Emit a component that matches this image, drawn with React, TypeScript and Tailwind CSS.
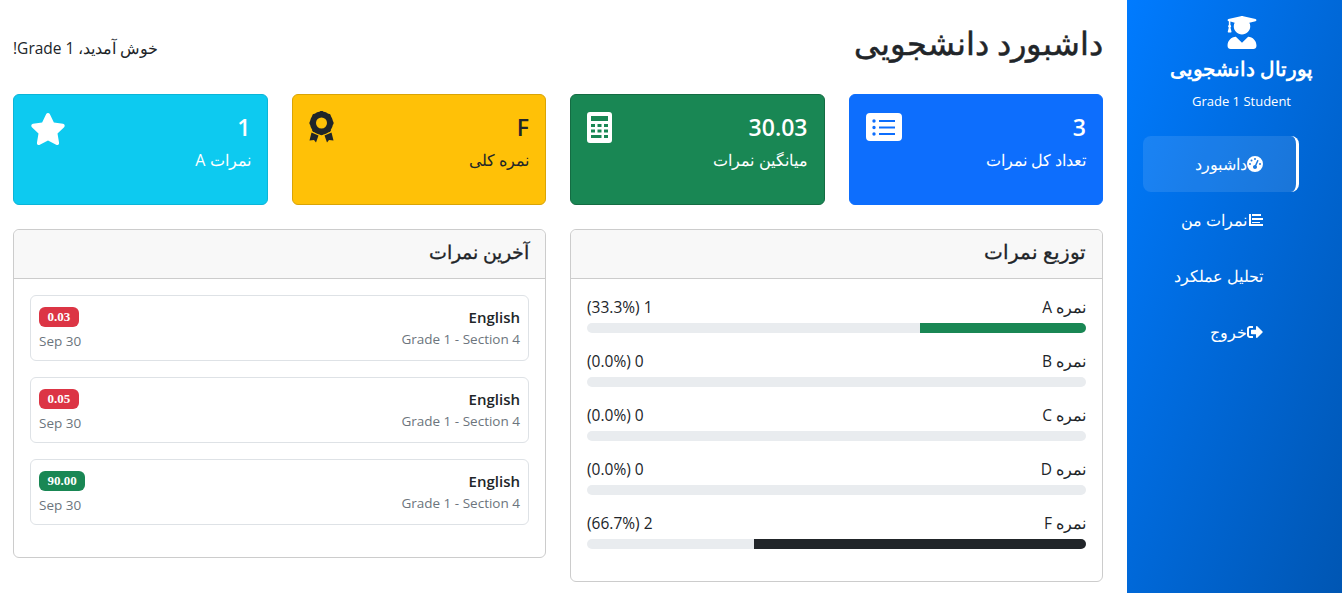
import { FaSignOutAlt, FaStar, FaUserGraduate } from "react-icons/fa";
import { FaGaugeHigh } from "react-icons/fa6";

const ListIcon = () => (
  <svg width="36" height="28" viewBox="0 0 36 28" fill="currentColor" className="mt-[2px]">
    <path
      fillRule="evenodd"
      d="M4 0h28a4 4 0 0 1 4 4v20a4 4 0 0 1-4 4H4a4 4 0 0 1-4-4V4a4 4 0 0 1 4-4zm5.700 8a1.700 1.700 0 1 0-3.400 0 1.700 1.700 0 0 0 3.400 0zm0 6.500a1.700 1.700 0 1 0-3.400 0 1.700 1.700 0 0 0 3.400 0zm0 6.500a1.700 1.700 0 1 0-3.400 0 1.700 1.700 0 0 0 3.400 0zM13 7v2h16V7zm0 6.500v2h16v-2zm0 6.500v2h16v-2z"
    />
  </svg>
);

const CalcIcon = () => (
  <svg width="25" height="31" viewBox="0 0 25 31" fill="currentColor" className="mt-[1px]">
    <path
      fillRule="evenodd"
      d="M3 0h19a3 3 0 0 1 3 3v25a3 3 0 0 1-3 3H3a3 3 0 0 1-3-3V3a3 3 0 0 1 3-3zm1 4v5h17V4zm0 8v3h4v-3zm6.500 0v3h4v-3zM17 12v3h4v-3zM4 17.500v3h4v-3zm6.500 0v3h4v-3zm6.500 0v3h4v-3zM4 23v3h10.500v-3zm13 0v3h4v-3z"
    />
  </svg>
);

const AwardIcon = () => (
  <svg width="25" height="32" viewBox="0 0 25 32" fill="currentColor">
    <circle cx="12.500" cy="12" r="8.500" fill="none" stroke="currentColor" strokeWidth="6" />
    <circle cx="12.500" cy="1.800" r="2" />
    <circle cx="19.700" cy="4.800" r="2" />
    <circle cx="22.700" cy="12" r="2" />
    <circle cx="19.700" cy="19.200" r="2" />
    <circle cx="12.500" cy="22.200" r="2" />
    <circle cx="5.300" cy="19.200" r="2" />
    <circle cx="2.300" cy="12" r="2" />
    <circle cx="5.300" cy="4.800" r="2" />
    <path d="M2.500 21.500l7 3-2.500 7-2-2.500-4.500.5zM22.500 21.500l-7 3 2.500 7 2-2.500 4.500.5z" />
  </svg>
);

const GradesIcon = () => (
  <svg width="16" height="16" viewBox="0 0 16 16" fill="currentColor">
    <path d="M2 2h2v10h12v2H2zM5 2h9v2H5zM5 6h11v2H5zM5 10h8v1H5z" />
  </svg>
);

const stats = [
  { value: "3", label: "تعداد کل نمرات", bg: "bg-[#0d6efd] border-[#0d6efd] text-white", icon: <ListIcon /> },
  { value: "30.03", label: "میانگین نمرات", bg: "bg-[#198754] border-[#146c43] text-white", icon: <CalcIcon /> },
  { value: "F", label: "نمره کلی", bg: "bg-[#ffc107] border-[#d9a406] text-[#212529]", icon: <AwardIcon /> },
  { value: "1", label: "نمرات A", bg: "bg-[#0dcaf0] border-[#0bb5d8] text-white", icon: <FaStar className="text-[36px]" /> },
];

const dist = [
  { label: "نمره A", count: "1 (33.3%)", pct: "w-[33.3%] bg-[#198754]" },
  { label: "نمره B", count: "0 (0.0%)", pct: "w-0" },
  { label: "نمره C", count: "0 (0.0%)", pct: "w-0" },
  { label: "نمره D", count: "0 (0.0%)", pct: "w-0" },
  { label: "نمره F", count: "2 (66.7%)", pct: "w-[66.5%] bg-[#212529]" },
];

const grades = [
  { score: "0.03", color: "bg-[#dc3545]" },
  { score: "0.05", color: "bg-[#dc3545]" },
  { score: "90.00", color: "bg-[#198754]" },
];

const App = () => {
  return (
    <div dir="rtl" className="flex h-[593px] overflow-hidden bg-white text-[16px] leading-[24px] text-[#212529] font-['Open_Sans','Noto_Sans',sans-serif]">
      {/* Sidebar */}
      <aside className="w-[215px] shrink-0 bg-gradient-to-br from-[#007bff] to-[#0056b3] text-white">
        <div className="flex flex-col items-center pl-[14px] pt-[16px]">
          <FaUserGraduate className="h-[33px] w-[30px]" />
          <h2 className="mt-[8px] text-[19.5px] font-bold leading-[24px]">پورتال دانشجویی</h2>
          <p className="mt-[10px] text-[13px] leading-[20px]">Grade 1 Student</p>
        </div>
        <nav className="mt-[25px] flex flex-col pl-4 pr-[43px] text-[15.5px]">
          <a className="flex h-[56px] items-center rounded-lg border-r-[3px] border-white bg-white/10 pr-[33px]">
            <FaGaugeHigh className="text-[16px]" />
            <span>داشبورد</span>
          </a>
          <a className="flex h-[56px] items-center pr-[36px]">
            <GradesIcon />
            <span>نمرات من</span>
          </a>
          <a className="flex h-[56px] items-center pr-[36px]">
            <span>تحلیل عملکرد</span>
          </a>
          <a className="flex h-[56px] items-center pr-[36px]">
            <FaSignOutAlt className="text-[16px]" />
            <span>خروج</span>
          </a>
        </nav>
      </aside>

      {/* Main */}
      <main className="flex-1 pl-[13px] pr-[24px]">
        <div className="flex h-[94px] items-center justify-between">
          <h1 className="pb-[8px] text-[32px] font-normal leading-[38px] [-webkit-text-stroke:0.5px_#212529]">داشبورد دانشجویی</h1>
          <p className="pt-[2px] text-[15.5px]">خوش آمدید، Grade 1!</p>
        </div>

        <div className="grid grid-cols-4 gap-x-[24px]">
          {stats.map((s) => (
            <div key={s.label} className={`flex h-[111px] justify-between rounded-md border p-4 ${s.bg}`}>
              <div>
                <div className="pt-[2px] text-[23px] font-semibold leading-[29px]">{s.value}</div>
                <div className="mt-[6px]">{s.label}</div>
              </div>
              {s.icon}
            </div>
          ))}
        </div>

        <div className="mt-[24px] grid grid-cols-2 items-start gap-x-[24px]">
          <section className="h-[353px] rounded-md border border-[#ccc]">
            <h3 className="h-[49px] rounded-t-md border-b border-[#ccc] bg-[#f8f8f8] px-4 py-[10px] text-[19.5px] font-normal leading-[24px] [-webkit-text-stroke:0.3px_#212529]">توزیع نمرات</h3>
            <div className="px-4 pt-[16px]">
              {dist.map((d) => (
                <div key={d.label} className="mb-4">
                  <div className="mb-1 flex h-[24px] justify-between text-[15.5px]">
                    <span>{d.label}</span>
                    <span>{d.count}</span>
                  </div>
                  <div className="h-[10px] overflow-hidden rounded-full bg-[#e9ecef]">
                    <div className={`h-full ${d.pct}`} />
                  </div>
                </div>
              ))}
            </div>
          </section>

          <section className="h-[329px] rounded-md border border-[#ccc]">
            <h3 className="h-[49px] rounded-t-md border-b border-[#ccc] bg-[#f8f8f8] px-4 py-[10px] text-[19px] font-normal leading-[24px] [-webkit-text-stroke:0.3px_#212529]">آخرین نمرات</h3>
            <div className="flex flex-col gap-4 p-4">
              {grades.map((g) => (
                <div key={g.score} className="flex h-[66px] items-center justify-between rounded-md border border-[#dee2e6] px-2">
                  <div className="pb-[1px]">
                    <div className="text-[15px] font-semibold leading-[22px]">English</div>
                    <div className="mt-[1px] text-[13.5px] leading-[20px] text-[#6c757d]">Grade 1 - Section 4</div>
                  </div>
                  <div className="flex flex-col items-end pt-[3px]">
                    <span dir="ltr" className={`rounded-md px-[8.5px] text-[13px] font-bold leading-[20px] text-white font-['Liberation_Serif',serif] ${g.color}`}>{g.score}</span>
                    <span className="mt-[4px] text-[13.5px] leading-[21px] text-[#6c757d]">Sep 30</span>
                  </div>
                </div>
              ))}
            </div>
          </section>
        </div>
      </main>
    </div>
  );
};

export default App;
